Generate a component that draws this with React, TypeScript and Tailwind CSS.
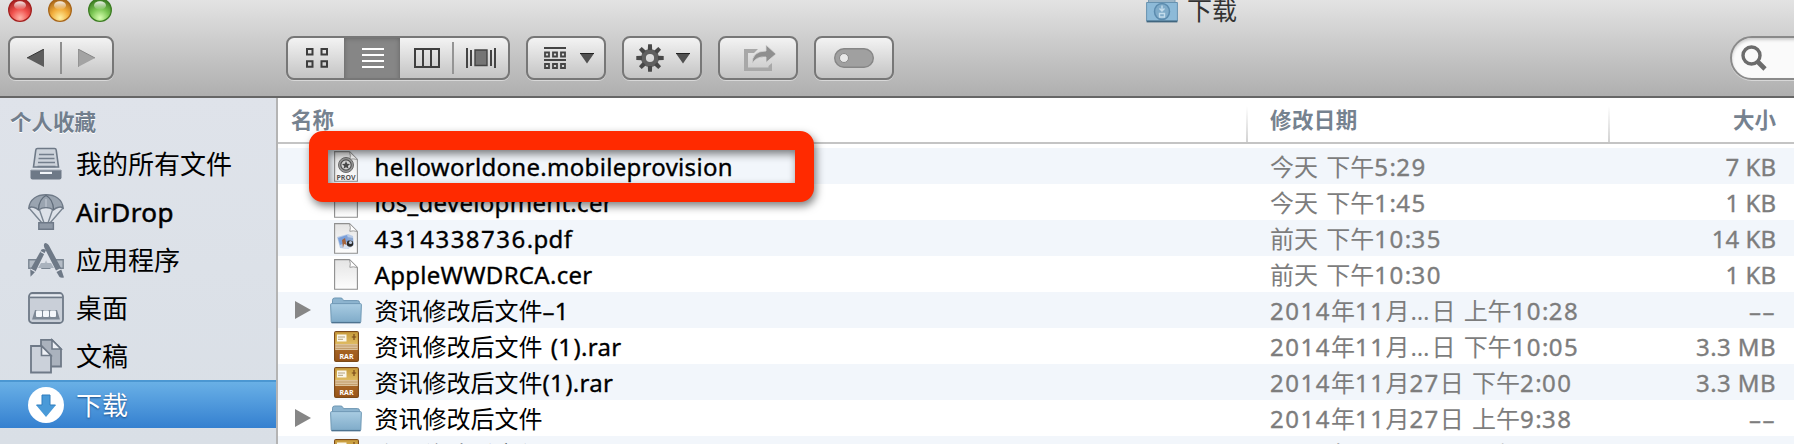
import type { ReactNode } from "react";

const font = "font-['Noto_Sans','Noto_Sans_CJK_SC',sans-serif]";

function Light({ id, dark, mid, glow }: { id: string; dark: string; mid: string; glow: string }) {
  return (
    <svg width="24" height="24" viewBox="0 0 24 24">
      <defs>
        <radialGradient id={id} cx="50%" cy="85%" r="80%">
          <stop offset="0" stopColor={glow} />
          <stop offset="0.5" stopColor={mid} />
          <stop offset="1" stopColor={dark} />
        </radialGradient>
        <linearGradient id={id + "s"} x1="0" y1="0" x2="0" y2="1">
          <stop offset="0" stopColor="#fff" stopOpacity="0.9" />
          <stop offset="1" stopColor="#fff" stopOpacity="0.05" />
        </linearGradient>
      </defs>
      <circle cx="12" cy="12" r="11.3" fill={`url(#${id})`} stroke={dark} strokeWidth="1.3" />
      <ellipse cx="12" cy="7.5" rx="6" ry="4.2" fill={`url(#${id}s)`} />
    </svg>
  );
}

function Folder() {
  return (
    <svg width="32" height="27" viewBox="0 0 32 27">
      <defs>
        <linearGradient id="fold" x1="0" y1="0" x2="0" y2="1">
          <stop offset="0" stopColor="#a9cce2" />
          <stop offset="1" stopColor="#7fabc9" />
        </linearGradient>
      </defs>
      <path d="M2.5 8V3.2Q2.5 1 4.7 1h6q1.6 0 2.2 1.4l.5 1.2H27.5q2 0 2 2V8z" fill="#8db4cf" stroke="#6f97b3" />
      <path d="M.6 7.6q0-1 1-1H30.4q1 0 1 1L30.8 24.6q0 1-1 1H2.2q-1 0-1-1z" fill="url(#fold)" stroke="#7099b5" />
      <path d="M1.5 25.6h29" stroke="#4d7390" strokeWidth="1.4" />
    </svg>
  );
}

function Doc({ children }: { children?: ReactNode }) {
  return (
    <svg width="24" height="31" viewBox="0 0 24 31">
      <defs>
        <linearGradient id="page" x1="0" y1="0" x2="0" y2="1">
          <stop offset="0" stopColor="#e4e4e4" />
          <stop offset="1" stopColor="#fdfdfd" />
        </linearGradient>
      </defs>
      <path d="M.6.6H15.5L23.4 8.5V30.2H.6z" fill="url(#page)" stroke="#8f8f8f" strokeWidth="1.1" />
      <path d="M15.5.6Q17 5 15.8 8.3 19 7.3 23.4 8.5z" fill="#fff" stroke="#9c9c9c" />
      {children}
    </svg>
  );
}

function ProvDoc() {
  return (
    <Doc>
      <circle cx="12" cy="14" r="7.5" fill="#9a9a9a" stroke="#6a6a6a" />
      <circle cx="12" cy="14" r="5.2" fill="#d4d4d4" stroke="#505050" strokeWidth="1.2" />
      <path d="M12 10l1.200 2.800 2.900.2-2.200 1.900.7 2.900-2.600-1.600-2.500 1.600.7-2.900L8 13l2.900-.2z" fill="#484848" />
      <text x="12" y="28.8" textAnchor="middle" fontSize="7" fontWeight="700" fontFamily="Noto Sans" fill="#555">PROV</text>
    </Doc>
  );
}

function PdfDoc() {
  return (
    <Doc>
      <path d="M3 14l11-3 5 2 1 9-6 4-8-1z" fill="#b9cbe6" />
      <path d="M4 15l9-3 2 6-9 4z" fill="#7ba0da" />
      <path d="M8 17l3-2 2 9-4 1z" fill="#a5643c" />
      <path d="M10 21l8 3-5 2-4-1z" fill="#d9e2f0" />
      <circle cx="16" cy="20.500" r="3.200" fill="#2a2a2a" />
      <path d="M13 14l6 1v3l-5-1z" fill="#8ba7d2" />
      <circle cx="16.500" cy="19.500" r="1.600" fill="#c0cde2" />
    </Doc>
  );
}

function Rar() {
  return (
    <svg width="25" height="31" viewBox="0 0 25 31">
      <defs>
        <linearGradient id="rarT" x1="0" y1="0" x2="0" y2="1">
          <stop offset="0" stopColor="#c79c3c" />
          <stop offset="1" stopColor="#dfbb62" />
        </linearGradient>
        <linearGradient id="rarB" x1="0" y1="0" x2="0" y2="1">
          <stop offset="0" stopColor="#b87a35" />
          <stop offset="1" stopColor="#9a5518" />
        </linearGradient>
      </defs>
      <rect x=".6" y=".6" width="23.8" height="29.8" rx="1.5" fill="url(#rarB)" stroke="#7b4a1a" strokeWidth="1.2" />
      <path d="M1.2 1.2h22.6v12H1.2z" fill="url(#rarT)" />
      <path d="M1.2 13h22.6v6H1.2z" fill="#dcc19a" />
      <path d="M1.2 15h22.6M1.2 17.5h22.6" stroke="#c39d6b" />
      <path d="M3 3.500h9.500v7H3z" fill="#fbf7ea" />
      <path d="M4 6h7M4 8.300h5" stroke="#b5a37c" />
      <path d="M20 3v6M17.800 6h4.400" stroke="#7b4a1a" strokeWidth="1.2" />
      <text x="12.5" y="27.6" textAnchor="middle" fontSize="7" fontWeight="700" fontFamily="Noto Sans" fill="#fff">RAR</text>
    </svg>
  );
}

const sideIcons: Record<string, ReactNode> = {
  all: (
    <svg width="36" height="36" viewBox="0 0 36 36">
      <path d="M5.5 21L7.800 4Q8 2.500 9.500 2.500h17q1.500 0 1.700 1.500L30.500 21z" fill="#cdd3db" stroke="#6e7987" strokeWidth="1.6" />
      <path d="M11 8.500h15M10.500 12.500h16M10 16.500h17M9.500 20.500h18" stroke="#737e8c" strokeWidth="1.7" />
      <path d="M2.500 24h31V31.500q0 2-2 2h-27q-2 0-2-2z" fill="#6e7987" />
      <path d="M3 24h30" stroke="#a3acb7" />
      <path d="M12 25.800h12v2.200H12z" fill="#f2f5f9" />
    </svg>
  ),
  drop: (
    <svg width="36" height="36" viewBox="0 0 36 36">
      <path d="M1 14L14 29M35 14L22 29M11.500 16l4.500 13M24.500 16L20 29" stroke="#7a8592" strokeWidth="1.4" fill="none" />
      <path d="M.8 14C2 5 9 .8 18 .8S34 5 35.200 14Q33 12.500 30.500 13.300 27.500 14 25.500 16 22 13.500 18 13.500T10.500 16Q8.500 14 5.500 13.300 3 12.500.8 14z" fill="#9aa4b0" stroke="#6e7987" strokeWidth="1.4" />
      <path d="M10.500 15.500Q11 5 18 1.500 25 5 25.500 15.500" fill="none" stroke="#5f6b79" strokeWidth="1.3" />
      <path d="M18 5v8" fill="none" stroke="#b9c1cb" strokeWidth="1.5" />
      <path d="M10.800 28.800h14.600v6.400H10.800z" fill="#8f99a6" stroke="#6e7987" strokeWidth="1.4" />
    </svg>
  ),
  apps: (
    <svg width="36" height="36" viewBox="0 0 36 36">
      <path d="M.8 17.800h34.400v8.400H.8z" fill="#b4bcc6" stroke="#7a8592" strokeWidth="1.4" />
      <path d="M18 10L29 30M19 9L6 31" stroke="#dfe3ea" strokeWidth="8" />
      <path d="M13 21h10l3 5H10z" fill="#a9b2bd" />
      <path d="M17 1q3 0 4.500 3.500L33 26l-5 2.500L16.500 6Q15 2.500 17 1z" fill="#6e7987" />
      <path d="M28.500 30l4.800-2.500L36 35.500q-3 .5-4.500-.5z" fill="#6e7987" />
      <path d="M13.500 7.500q2-1.500 4.500.8L7.500 29.500 2.500 34.800 2.300 27.500z" fill="#6e7987" />
      <path d="M12.500 9.500l5 2.800M2.500 27l5 2.800" stroke="#dfe3ea" strokeWidth="1.1" />
    </svg>
  ),
  desk: (
    <svg width="36" height="32" viewBox="0 0 36 32">
      <rect x="1" y="1" width="34" height="30" rx="3.5" fill="#c9cfd8" stroke="#6e7987" strokeWidth="1.8" />
      <path d="M2 5.500h32" stroke="#6e7987" strokeWidth="1.5" />
      <path d="M2.500 3.300h31" stroke="#e6eaf0" strokeWidth="1.5" />
      <path d="M7 18h22l3 9.500H4z" fill="#7d8895" />
      <rect x="8" y="18.5" width="6" height="6.5" rx="1" fill="#f4f7fb" />
      <rect x="15" y="18.5" width="6" height="6.5" rx="1" fill="#f4f7fb" />
      <rect x="22" y="18.5" width="6" height="6.5" rx="1" fill="#f4f7fb" />
    </svg>
  ),
  docs: (
    <svg width="36" height="36" viewBox="0 0 36 36">
      <path d="M13 1.800H24L33 11V28.500H13z" fill="#aab2bd" stroke="#6e7987" strokeWidth="1.8" />
      <path d="M24 2v9h9z" fill="#eef1f6" stroke="#6e7987" strokeWidth="1.6" />
      <path d="M3 8H13.500L23 17.500V34.500H3z" fill="#cbd1da" stroke="#6e7987" strokeWidth="1.8" />
      <path d="M13.500 8v9.500H23z" fill="#eef1f6" stroke="#6e7987" strokeWidth="1.6" />
    </svg>
  ),
  down: (
    <svg width="36" height="36" viewBox="0 0 36 36">
      <circle cx="18" cy="18" r="18" fill="#fff" />
      <path d="M14 8h8v10h6L18 30 8 18h6z" fill="#4a9ad8" />
      <path d="M8.500 18H14V8h8v10h5.500" fill="none" stroke="#2f7dbd" strokeWidth="1" />
    </svg>
  ),
};

const side = [
  ["all", "我的所有文件"],
  ["drop", "AirDrop"],
  ["apps", "应用程序"],
  ["desk", "桌面"],
  ["docs", "文稿"],
  ["down", "下载"],
];

const files = [
  ["prov", "helloworldone.mobileprovision", "今天 下午5:29", "7 KB"],
  ["doc", "ios_development.cer", "今天 下午1:45", "1 KB"],
  ["pdf", "4314338736.pdf", "前天 下午10:35", "14 KB"],
  ["doc", "AppleWWDRCA.cer", "前天 下午10:30", "1 KB"],
  ["folder", "资讯修改后文件–1", "2014年11月…日 上午10:28", "––"],
  ["rar", "资讯修改后文件 (1).rar", "2014年11月…日 下午10:05", "3.3 MB"],
  ["rar", "资讯修改后文件(1).rar", "2014年11月27日 下午2:00", "3.3 MB"],
  ["folder", "资讯修改后文件", "2014年11月27日 上午9:38", "––"],
  ["rar", "资讯修改后文件.rar", "2014年11月27日 上午9:30", "3.3 MB"],
];

/* Latin runs, digits and the ellipsis are set a little wider and heavier than the Chinese text around them. */
function Spaced({ text }: { text: string }) {
  return (
    <>
      {text.split(/(\d+|…|[A-Za-z_.:()–]+| )/).map((run, i) => {
        if (/^\d/.test(run)) return <span key={i} className="tracking-[1.5px] [-webkit-text-stroke:0.35px]">{run}</span>;
        if (run === "…") return <span key={i} className="ml-px tracking-[2px]">{run}</span>;
        if (run === " ") return <span key={i} className="tracking-[2px]">{run}</span>;
        if (/^[A-Za-z_.:()–]/.test(run)) return <span key={i} className="tracking-[0.3px] [-webkit-text-stroke:0.35px]">{run}</span>;
        return run;
      })}
    </>
  );
}

function FileIcon({ kind }: { kind: string }) {
  if (kind === "prov") return <ProvDoc />;
  if (kind === "pdf") return <PdfDoc />;
  if (kind === "folder") return <Folder />;
  if (kind === "rar") return <Rar />;
  return <Doc />;
}

const btn =
  "flex h-[44px] shrink-0 items-center rounded-[8px] border-2 border-[#777] bg-linear-to-b from-[#f3f3f3] to-[#c4c4c4] shadow-[0_1px_0_#d8d8d8]";

function Caret() {
  return (
    <svg width="14" height="11" viewBox="0 0 14 11">
      <path d="M0 .5h14L7 10.500z" fill="#505050" />
      <path d="M0 .5h14" stroke="#222" />
    </svg>
  );
}

function Toolbar() {
  return (
    <div className="h-[98px] shrink-0 overflow-hidden border-b-2 border-[#666] bg-linear-to-b from-[#e3e3e3] to-[#afafaf]">
      <div className="flex h-[36px] items-start">
        <div className="-mt-[2px] ml-2 flex w-[1138px] gap-4">
          <Light id="r" dark="#a3201f" mid="#f0504c" glow="#ffb3a8" />
          <Light id="y" dark="#a8661a" mid="#f2ac3a" glow="#fff0a0" />
          <Light id="g" dark="#3c7d22" mid="#7cc754" glow="#d8ffb0" />
        </div>
        <div className="-mt-[5px]">
          <svg width="32" height="28" viewBox="0 0 32 28">
            <path d="M2.500 8V3.200Q2.500 1 4.700 1H27q2 0 2 2V8z" fill="#9cb6c8" stroke="#7d9db3" />
            <path d="M.6 7.500h30.800V26H.6z" fill="#8dbad8" stroke="#6792b0" />
            <path d="M.6 26.500h30.800" stroke="#41667f" strokeWidth="1.8" />
            <ellipse cx="16" cy="16.5" rx="7.5" ry="8" fill="#7fabc9" stroke="#5b8bae" strokeWidth="1.5" />
            <path d="M16 10.500v5m-2.500-2L16 16 18.500 13.500M13.500 18.500h5v3.500h-5z" fill="none" stroke="#c3dcec" strokeWidth="1.4" />
          </svg>
        </div>
        <div className="-mt-[8px] ml-[9px] text-[25px] leading-[36px] text-[#333]">下载</div>
      </div>
      <div className="flex">
        <div className={btn + " ml-2 w-[106px] justify-between px-[17px]"}>
          <svg width="17" height="18" viewBox="0 0 17 18"><path d="M17 0v18L0 9z" fill="#5d5d5d" /><path d="M0 9L17 0" stroke="#333" /></svg>
          <div className="h-8 w-[2px] bg-[#8f8f8f]" />
          <svg width="17" height="18" viewBox="0 0 17 18"><path d="M0 0v18L17 9z" fill="#a3a3a3" /><path d="M0 18V0l17 9" fill="none" stroke="#868686" /></svg>
        </div>
        <div className={btn + " ml-[172px] w-[224px] overflow-hidden"}>
          <div className="flex w-[56px] justify-center pl-[2px]">
            <svg width="22" height="20" viewBox="0 0 22 20" fill="none" stroke="#3d3d3d" strokeWidth="2">
              <path d="M1 1h5.500v5.500H1zM15.500 1H21v5.500h-5.500zM1 13.300h5.500v5.500H1zM15.500 13.300H21v5.500h-5.500z" />
            </svg>
          </div>
          <div className="flex h-[44px] w-[56px] items-center justify-center bg-[#868686] pl-[2px] shadow-[inset_0_2px_5px_#606060]">
            <svg width="22" height="21" viewBox="0 0 22 21" stroke="#fff" strokeWidth="2">
              <path d="M0 1h22M0 7h22M0 13h22M0 19h22" />
            </svg>
          </div>
          <div className="flex w-[52px] justify-center pl-[2px]">
            <svg width="26" height="20" viewBox="0 0 26 20" fill="none" stroke="#3f3f3f" strokeWidth="2">
              <path d="M1 1h24v18H1zM9 1v18M17 1v18" />
            </svg>
          </div>
          <div className="h-8 w-[2px] bg-[#949494]" />
          <div className="flex flex-1 justify-center">
            <svg width="30" height="20" viewBox="0 0 30 20" stroke="#444" strokeWidth="2">
              <path d="M1 0v20M5 2v16M25 2v16M29 0v20" />
              <path d="M9 2h12v15.500H9z" fill="#757575" strokeWidth="1.4" />
            </svg>
          </div>
        </div>
        <div className={btn + " ml-4 w-[80px] justify-between pr-[10px] pl-4"}>
          <svg width="22" height="22" viewBox="0 0 22 22" fill="none" stroke="#444" strokeWidth="1.8">
            <path d="M0 1h22M0 13h22" strokeWidth="2" />
            <path d="M1 5.500h4V9.500H1zM9 5.500h4V9.500H9zM17 5.500h4V9.500h-4zM1 17h4v4H1zM9 17h4v4H9zM17 17h4v4h-4z" />
          </svg>
          <Caret />
        </div>
        <div className={btn + " ml-4 w-[80px] justify-between pr-[10px] pl-3"}>
          <svg width="28" height="28" viewBox="-14 -14 28 28">
            <circle r="6.6" fill="none" stroke="#606060" strokeWidth="5" />
            {[0, 45, 90, 135, 180, 225, 270, 315].map((a) => (
              <path key={a} d="M-1.900-13.700h3.800L2.200-8h-4.400z" fill="#484848" transform={`rotate(${a})`} />
            ))}
          </svg>
          <Caret />
        </div>
        <div className={btn + " ml-4 w-[80px] justify-center pl-1"}>
          <svg width="32" height="27" viewBox="0 0 32 27">
            <path d="M14 4H0V26H28V18L24.500 21V22.500H4V8H10z" fill="#a8a8a8" />
            <path d="M8 19Q8 6 22 6V0L32 9 22 17.500V12Q12 11 8 19z" fill="#8f8f8f" stroke="#d8d8d8" strokeWidth=".8" />
          </svg>
        </div>
        <div className={btn + " ml-4 w-[80px] justify-center"}>
          <svg width="40" height="20" viewBox="0 0 40 20">
            <rect x=".7" y=".7" width="38.6" height="18.6" rx="9.3" fill="#a0a0a0" stroke="#868686" strokeWidth="1.4" />
            <circle cx="10" cy="10" r="4.5" fill="#e8e8e8" stroke="#888" />
          </svg>
        </div>
        <div className="ml-[836px] flex h-[44px] w-[100px] shrink-0 items-center rounded-l-[22px] border-2 border-[#8a8a8a] bg-[#fafafa] pl-[9px] shadow-[inset_0_2px_3px_#ccc,0_1px_0_#d8d8d8]">
          <svg width="26" height="26" viewBox="0 0 26 26" fill="none" stroke="#6c6c6c">
            <circle cx="10.5" cy="10.5" r="8.5" strokeWidth="3.4" />
            <path d="M16.500 16.500l7.500 7.500" strokeWidth="4.6" />
          </svg>
        </div>
      </div>
    </div>
  );
}

export default function App() {
  return (
    <div className={`${font} relative flex h-[444px] w-[1794px] flex-col overflow-hidden bg-white`}>
      <Toolbar />
      <div className="flex min-h-0 flex-1">
        <div className="w-[278px] shrink-0 border-r-2 border-[#b4b4b4] bg-linear-to-b from-[#dfe3ea] to-[#d9dfe6]">
          <div className="h-[42px] pl-[10px] text-[21.5px] leading-[47px] font-bold text-[#717e8d] [text-shadow:0_1px_0_#fff]">个人收藏</div>
          {side.map(([k, t]) => (
            <div
              key={k}
              className={
                k === "down"
                  ? "flex h-12 items-center border-t-2 border-[#4b97d2] bg-linear-to-b from-[#69b0e6] to-[#3480d0] pl-7 text-white [text-shadow:0_1px_2px_#1d4f8a]"
                  : "flex h-12 items-center pl-7 text-black"
              }
            >
              <div className="flex w-[48px] items-center">{sideIcons[k]}</div>
              <span className={k === "drop" ? "text-[26px] leading-[44px] tracking-[0.4px] [-webkit-text-stroke:0.5px_#000]" : "text-[26px] leading-[44px]"}>{t}</span>
            </div>
          ))}
        </div>
        <div className="flex min-w-0 flex-1 flex-col">
          <div className="flex h-[46px] shrink-0 border-b-2 border-[#c4c4c4] text-[21.5px] leading-[43px] font-bold text-[#76828f]">
            <div className="w-[968px] pl-[13px]">名称</div>
            <div className="mt-2 w-[2px] bg-linear-to-b from-white to-[#d2d2d2]" />
            <div className="w-[360px] pl-[22px] tracking-[0.4px]">修改日期</div>
            <div className="mt-2 w-[2px] bg-linear-to-b from-white to-[#d2d2d2]" />
            <div className="flex-1 pr-[18px] text-right">大小</div>
          </div>
          <div className="mt-1 min-h-0 flex-1 overflow-hidden">
            {files.map(([k, n, d, s]) => (
              <div key={n} className="flex h-9 items-center text-[24px] leading-9 odd:bg-[#f2f6fb]">
                <div className="flex w-[49px] justify-center">
                  {k === "folder" && <svg width="16" height="18" viewBox="0 0 16 18"><path d="M0 0v18L16 9z" fill="#868686" /></svg>}
                </div>
                <div className="flex w-[38px] items-center justify-center"><FileIcon kind={k} /></div>
                <div className="w-[905px] pt-[2px] pl-[9.5px] whitespace-pre text-black"><Spaced text={n} /></div>
                <div className="flex-1 pt-[2px] whitespace-pre text-[#7d7d7d]"><Spaced text={d} /></div>
                <div className={(s === "––" ? "tracking-[1.5px] " : s === "3.3 MB" ? "tracking-[0.4px] " : "") + "pt-[2px] pr-[18px] text-[#7d7d7d] [-webkit-text-stroke:0.35px]"}>{s}</div>
              </div>
            ))}
          </div>
        </div>
      </div>
      <div className="absolute top-[131px] left-[309px] h-[71px] w-[505px] rounded-[14px] border-[19px] border-[#ff2a00] drop-shadow-[2px_4px_4px_rgba(0,0,0,0.5)]" />
    </div>
  );
}
